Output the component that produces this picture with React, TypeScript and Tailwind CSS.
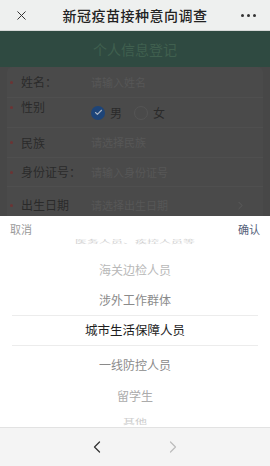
import { Check, ChevronLeft, ChevronRight, X } from "lucide-react";

const font = { fontFamily: '"Noto Sans CJK SC", "Noto Sans", sans-serif' };

function FormRow({ label, hint, h, line = true, children }: { label: string; hint?: string; h: string; line?: boolean; children?: React.ReactNode }) {
    return (
        <div className={`flex items-center ${h} ${line ? "border-b border-[#4f4f4f]" : ""}`}>
            <span className="w-[3px] h-[3px] rounded-full bg-[#6b3434] ml-[3px]" />
            <span className="ml-[8px] w-[70px] text-[12px] text-[#2a2a2a]">{label}</span>
            {hint && <span className="text-[11px] text-[#575757]">{hint}</span>}
            {children}
        </div>
    );
}

export default function App() {
    return (
        <div className="w-[270px] h-[466px] overflow-hidden flex flex-col bg-white" style={font}>
            {/* top bar */}
            <div className="h-[31px] shrink-0 flex items-center justify-between px-[14px] bg-[#eef0ef] border-b border-[#d6d8d7]">
                <X size={15} strokeWidth={1.6} className="text-[#333]" />
                <span className="text-[14px] font-medium text-[#222] tracking-[0.5px]">新冠疫苗接种意向调查</span>
                <div className="flex gap-[3px]">
                    <span className="w-[3px] h-[3px] rounded-full bg-[#333]" />
                    <span className="w-[3px] h-[3px] rounded-full bg-[#333]" />
                    <span className="w-[3px] h-[3px] rounded-full bg-[#333]" />
                </div>
            </div>

            {/* dimmed page */}
            <div className="h-[185px] shrink-0 flex flex-col bg-[#474747] overflow-hidden">
                <div className="h-[36px] shrink-0 flex items-center justify-center bg-[#2f4a41]">
                    <span className="text-[14px] text-[#40604f]">个人信息登记</span>
                </div>
                <div className="flex-1 bg-[#4a4a4a] mx-[7px] rounded-t-[5px]">
                    <FormRow label="姓名：" hint="请输入姓名" h="h-[31px]" />
                    <div className="flex h-[30px] border-b border-[#4f4f4f]">
                        <div className="flex items-center h-[30px] -mt-[6px]">
                            <span className="w-[3px] h-[3px] rounded-full bg-[#6b3434] ml-[3px]" />
                            <span className="ml-[8px] w-[70px] text-[12px] text-[#2a2a2a]">性别</span>
                        </div>
                        <div className="flex items-center gap-[5px]">
                            <span className="w-[14px] h-[14px] rounded-full bg-[#1d4478] flex items-center justify-center">
                                <Check size={9} strokeWidth={3} className="text-[#a9b4c2]" />
                            </span>
                            <span className="text-[12px] text-[#2a2a2a]">男</span>
                            <span className="ml-[7px] w-[14px] h-[14px] rounded-full border border-[#555]" />
                            <span className="text-[12px] text-[#2a2a2a]">女</span>
                        </div>
                    </div>
                    <FormRow label="民族" hint="请选择民族" h="h-[30px]" />
                    <FormRow label="身份证号：" hint="请输入身份证号" h="h-[29px]" />
                    <FormRow label="出生日期" hint="请选择出生日期" h="h-[36px]" line={false}>
                        <ChevronRight size={13} strokeWidth={1.5} className="ml-auto mr-[16px] text-[#5e5e5e]" />
                    </FormRow>
                </div>
            </div>

            {/* picker */}
            <div className="h-[211px] shrink-0 flex flex-col bg-white">
                <div className="h-[20px] shrink-0 flex items-end justify-between px-[10px] text-[11px] leading-[14px]">
                    <span className="text-[#9a9a9a]">取消</span>
                    <span className="text-[#55617a]">确认</span>
                </div>
                <div className="flex-1 overflow-hidden flex flex-col text-[12px] text-center">
                    <div className="h-[10px] shrink-0 flex items-center justify-center text-[#d2d2d2] scale-y-[0.4]">医务人员、疾控人员等</div>
                    <div className="h-[30px] mt-[9px] shrink-0 flex items-center justify-center text-[#b8b8b8]">海关边检人员</div>
                    <div className="h-[30px] shrink-0 flex items-center justify-center text-[#8a8a8a]">涉外工作群体</div>
                    <div className="h-[31px] shrink-0 mx-[12px] flex items-center justify-center text-[#1e1e1e] text-[12.5px] border-y border-[#ececec]">城市生活保障人员</div>
                    <div className="h-[38px] shrink-0 flex items-center justify-center text-[#8a8a8a]">一线防控人员</div>
                    <div className="h-[24px] shrink-0 flex items-center justify-center text-[#ababab]">留学生</div>
                    <div className="h-[26px] shrink-0 flex items-center justify-center text-[#cccccc] scale-y-[0.6]">其他</div>
                </div>
            </div>

            {/* browser nav */}
            <div className="flex-1 flex items-center justify-center gap-[56px] bg-[#f4f4f4] border-t border-[#e2e2e2]">
                <ChevronLeft size={20} strokeWidth={1.5} className="text-[#333]" />
                <ChevronRight size={20} strokeWidth={1.5} className="text-[#bdbdbd]" />
            </div>
        </div>
    );
}
